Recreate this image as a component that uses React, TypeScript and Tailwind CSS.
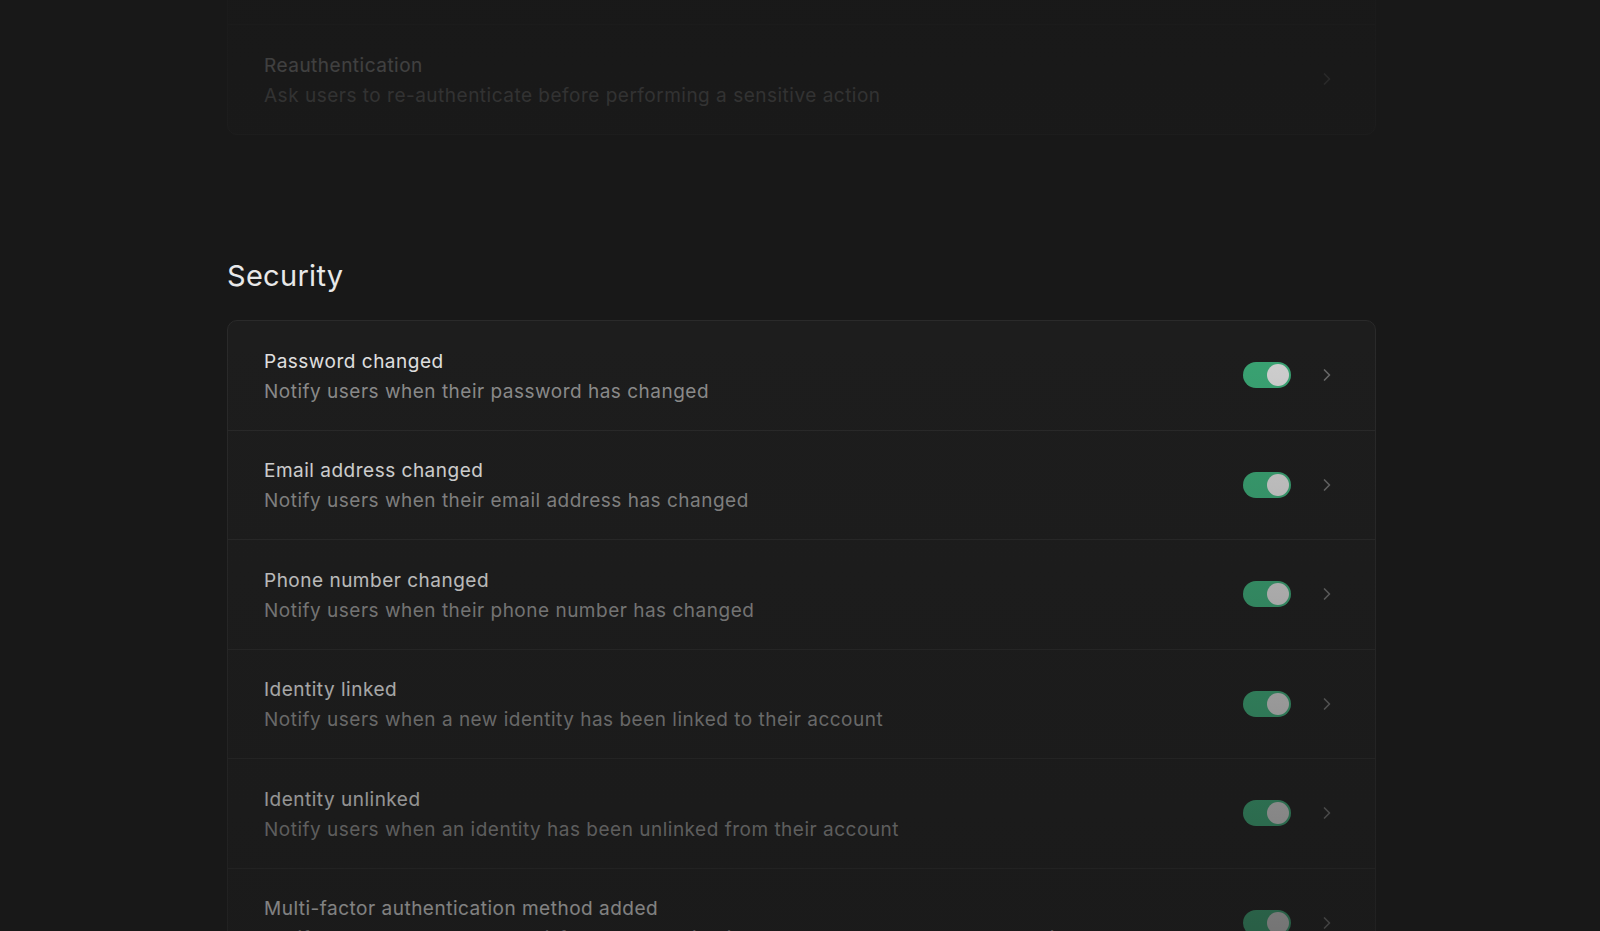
import { ChevronRight } from "lucide-react";

interface NotificationRow {
  title: string;
  description: string;
  enabled?: boolean;
}

const authRows: NotificationRow[] = [
  { title: "Manual linking", description: "Allow users to link identities manually" },
  { title: "Reauthentication", description: "Ask users to re-authenticate before performing a sensitive action" },
];

const securityRows: NotificationRow[] = [
  { title: "Password changed", description: "Notify users when their password has changed", enabled: true },
  { title: "Email address changed", description: "Notify users when their email address has changed", enabled: true },
  { title: "Phone number changed", description: "Notify users when their phone number has changed", enabled: true },
  { title: "Identity linked", description: "Notify users when a new identity has been linked to their account", enabled: true },
  { title: "Identity unlinked", description: "Notify users when an identity has been unlinked from their account", enabled: true },
  { title: "Multi-factor authentication method added", description: "Notify users when a new multi-factor authentication method has been added to their account", enabled: true },
  { title: "Multi-factor authentication method removed", description: "Notify users when a multi-factor authentication method has been removed from their account", enabled: true },
];

function Toggle({ on }: { on: boolean }) {
  return (
    <div
      className={`flex h-[26px] w-[48px] items-center rounded-full p-[2px] ${
        on ? "justify-end bg-[#3aa574]" : "justify-start bg-[#3a3a3a]"
      }`}
    >
      <div className="h-[22px] w-[22px] rounded-full bg-[#d2d2d2]" />
    </div>
  );
}

function Row({ row, last }: { row: NotificationRow; last: boolean }) {
  return (
    <div
      className={`flex h-[109.5px] items-center justify-between pl-[36px] pr-[38px] ${
        last ? "" : "border-b border-[#2a2a2a]"
      }`}
    >
      <div className="flex flex-col pt-[3px]">
        <span className="text-[19px] leading-[30px] text-[#e4e4e4]">{row.title}</span>
        <span className="text-[19px] leading-[30px] text-[#8f8f8f]">{row.description}</span>
      </div>
      <div className="flex items-center gap-[26px]">
        {row.enabled !== undefined && <Toggle on={row.enabled} />}
        <ChevronRight className="h-[20px] w-[20px] text-[#6a6a6a]" strokeWidth={2} />
      </div>
    </div>
  );
}

export default function App() {
  return (
    <div
      className="relative h-[931px] overflow-hidden bg-[#181818]"
      style={{ fontFamily: "Inter, 'Noto Sans', sans-serif" }}
    >
      <div className="ml-[227px] mt-[-86px] w-[1149px] tracking-[0.5px]">
        <div className="overflow-hidden rounded-[10px] border border-[#2a2a2a] bg-[#1d1d1d]">
          {authRows.map((row, i) => (
            <Row key={row.title} row={row} last={i === authRows.length - 1} />
          ))}
        </div>

        <h2 className="mt-[121px] text-[29px] leading-[40px] tracking-[0.3px] text-[#e8e8e8]">Security</h2>

        <div className="mt-[24px] overflow-hidden rounded-[10px] border border-[#2a2a2a] bg-[#1d1d1d]">
          {securityRows.map((row, i) => (
            <Row key={row.title} row={row} last={i === securityRows.length - 1} />
          ))}
        </div>
      </div>

      {/* scroll fades */}
      <div className="pointer-events-none absolute inset-x-0 top-0 h-[230px] bg-[linear-gradient(to_bottom,rgba(24,24,24,0.85)_0%,rgba(24,24,24,0.75)_60%,rgba(24,24,24,0)_100%)]" />
      <div className="pointer-events-none absolute inset-x-0 bottom-0 h-[600px] bg-[linear-gradient(to_top,rgba(24,24,24,0.5)_0%,rgba(24,24,24,0)_100%)]" />
    </div>
  );
}
